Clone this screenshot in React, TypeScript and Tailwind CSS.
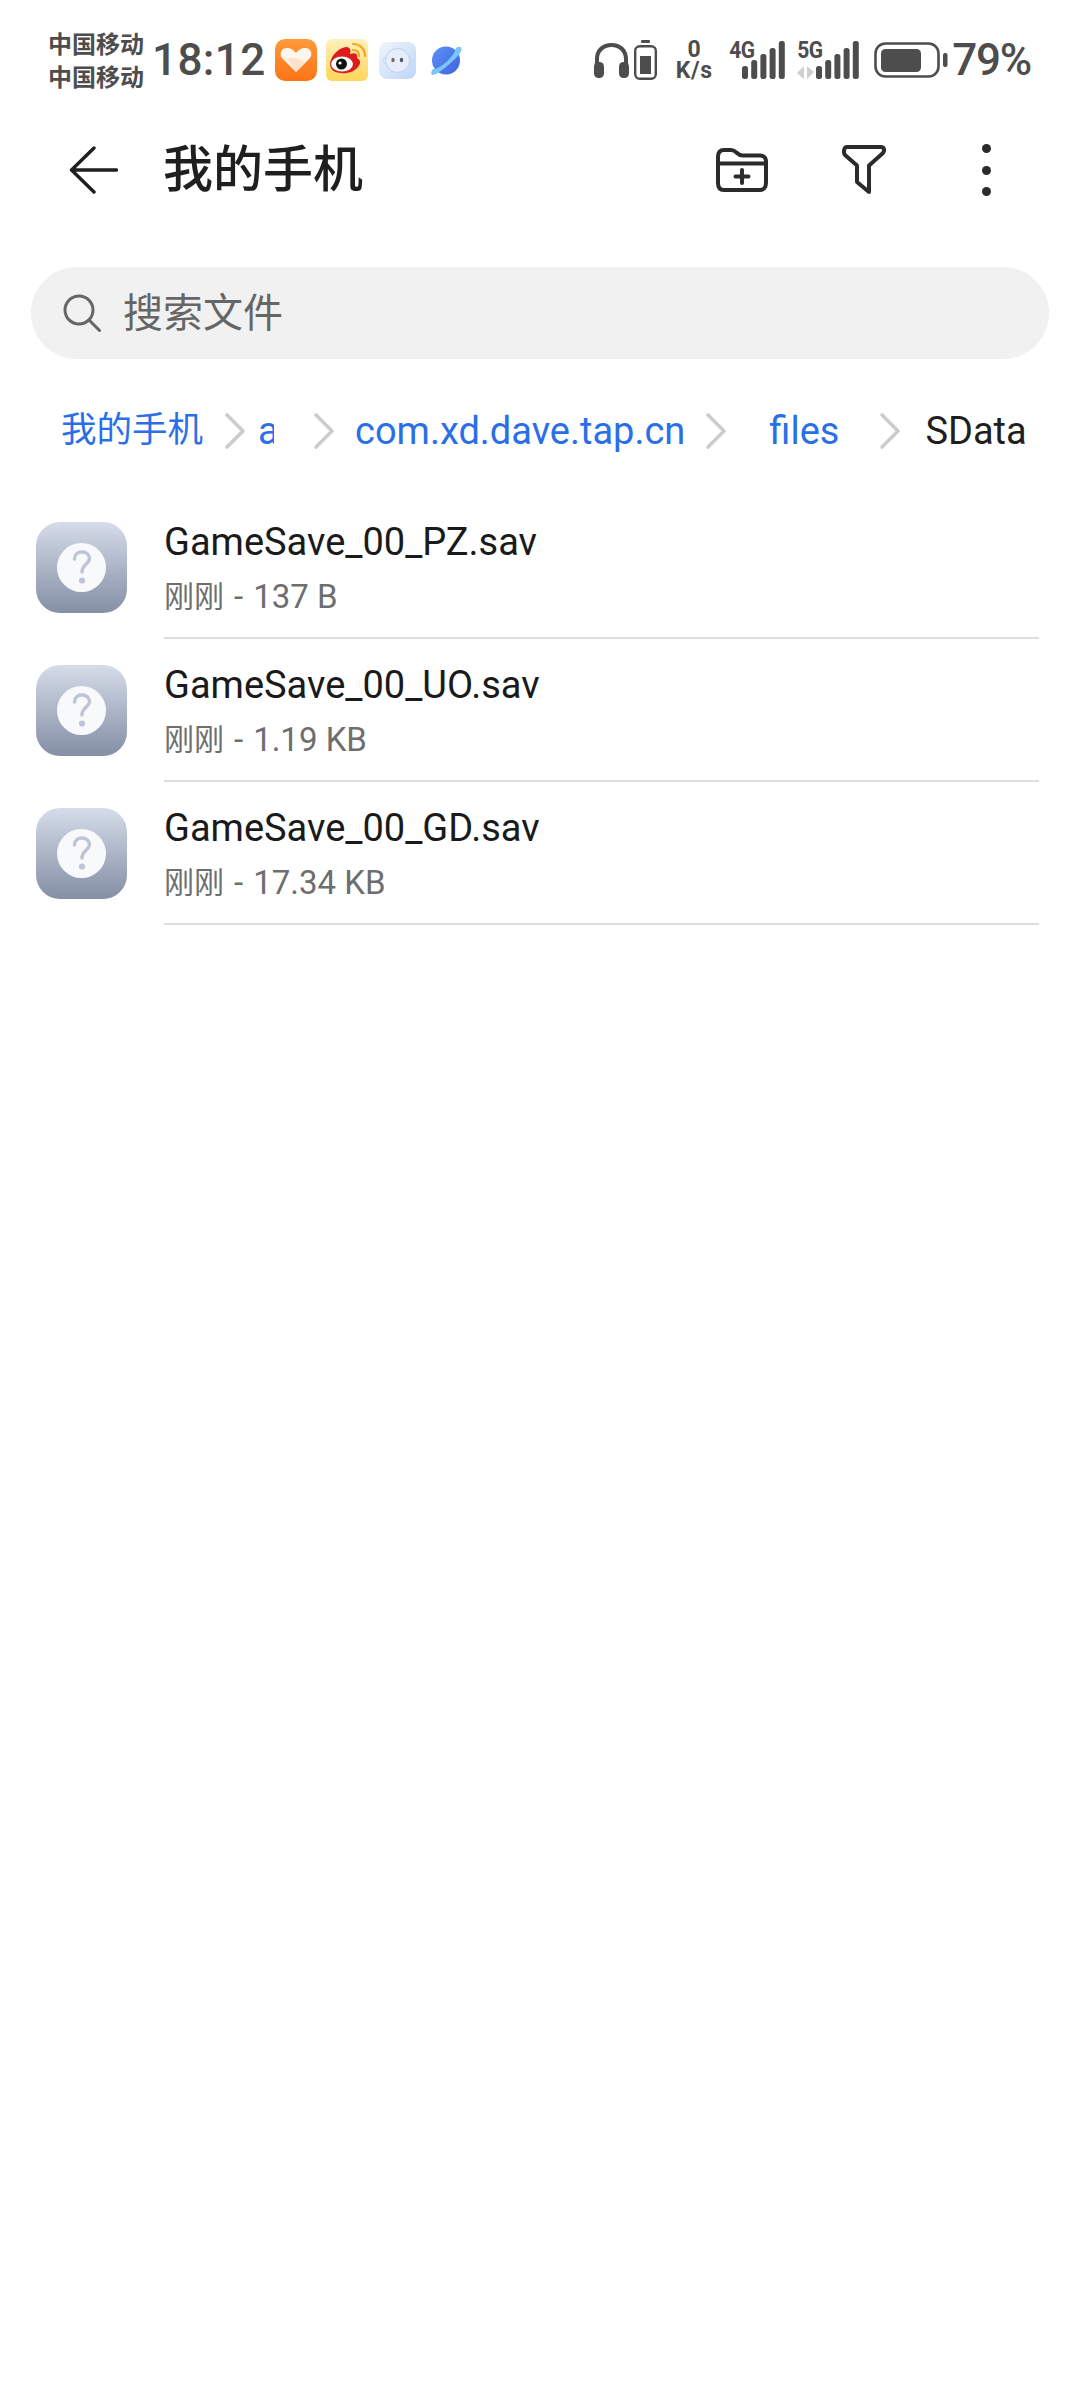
import { ChevronRight } from 'lucide-react';

const files = [
  { name: 'GameSave_00_PZ.sav', time: '刚刚', size: '137 B' },
  { name: 'GameSave_00_UO.sav', time: '刚刚', size: '1.19 KB' },
  { name: 'GameSave_00_GD.sav', time: '刚刚', size: '17.34 KB' },
];

const SANS = "font-['Roboto','Noto_Sans_CJK_SC',sans-serif]";

function HeartApp() {
  return (
    <svg width="42" height="42" viewBox="0 0 42 42" className="shrink-0">
      <defs>
        <linearGradient id="heartBg" x1="0" y1="0" x2="0" y2="1">
          <stop offset="0" stopColor="#ff9a3a" />
          <stop offset="1" stopColor="#fb7417" />
        </linearGradient>
      </defs>
      <rect width="42" height="42" rx="10" fill="url(#heartBg)" />
      <path d="M21 33 L7 19 C4 15 6 9 12 9 C16 9 19 11 21 14 C23 11 26 9 30 9 C36 9 38 15 35 19 Z" fill="#fff6ee" />
      <path d="M21 33 L12 20 C16 18 24 18 30 24 Z" fill="#fcd9bd" opacity="0.7" />
    </svg>
  );
}

function WeiboApp() {
  return (
    <svg width="42" height="42" viewBox="0 0 42 42" className="shrink-0">
      <defs>
        <linearGradient id="weiboBg" x1="0" y1="0" x2="0" y2="1">
          <stop offset="0" stopColor="#fff0bc" />
          <stop offset="1" stopColor="#ffd65a" />
        </linearGradient>
      </defs>
      <rect width="42" height="42" rx="6" fill="url(#weiboBg)" />
      <path d="M4 25 C4 18 12 9 20 8 C25 8 25 12 24 15 C29 13 32 15 31 19 C35 21 35 25 32 28 C28 33 21 35 15 34 C8 34 4 30 4 25 Z" fill="#dd1c1c" />
      <ellipse cx="16" cy="25" rx="11" ry="7.5" fill="#fff" />
      <circle cx="15.5" cy="25" r="5.5" fill="#111" />
      <circle cx="14" cy="24" r="1.6" fill="#fff" />
      <path d="M27 11 C31 11 33 13 33 17" fill="none" stroke="#f6a51f" strokeWidth="2.2" strokeLinecap="round" />
      <path d="M27 5 C34 5 39 10 39 17" fill="none" stroke="#f6a51f" strokeWidth="2.2" strokeLinecap="round" />
    </svg>
  );
}

function FaceApp() {
  return (
    <svg width="37" height="37" viewBox="0 0 37 37" className="shrink-0">
      <defs>
        <linearGradient id="faceBg" x1="0" y1="0" x2="1" y2="1">
          <stop offset="0" stopColor="#f0f5fb" />
          <stop offset="1" stopColor="#bcd6fb" />
        </linearGradient>
      </defs>
      <rect width="37" height="37" rx="8" fill="url(#faceBg)" />
      <circle cx="18.5" cy="18.5" r="12" fill="#e6eefb" stroke="#c4cfea" strokeWidth="1" />
      <path d="M6.5 15 L3 18.5 L6.5 22 M30.5 15 L34 18.5 L30.5 22" fill="none" stroke="#c4cfea" strokeWidth="1" />
      <ellipse cx="14" cy="18" rx="1.7" ry="2.2" fill="#7a6a5c" />
      <ellipse cx="22.5" cy="18" rx="1.7" ry="2.2" fill="#4d5668" />
    </svg>
  );
}

function PlanetApp() {
  return (
    <svg width="31" height="31" viewBox="0 0 31 31" className="shrink-0">
      <defs>
        <linearGradient id="planetBg" x1="0" y1="0" x2="1" y2="1">
          <stop offset="0" stopColor="#5d92f7" />
          <stop offset="1" stopColor="#3f63dc" />
        </linearGradient>
      </defs>
      <circle cx="15" cy="15.5" r="14" fill="url(#planetBg)" />
      <path d="M25 3 C28 1 31 1.5 30.5 5 C29.5 11 8 29 2.5 30 C-1 30.5 0 26 2 24 C8 25 24 11 25 3 Z" fill="#7cc4fb" />
    </svg>
  );
}

function Headphones() {
  return (
    <svg width="35" height="36" viewBox="0 0 35 36" className="shrink-0" fill="#4d4d4d">
      <path d="M1 24 V17 C1 7 8 1 17.5 1 C27 1 34 7 34 17 V24 H30 V17 C30 10 25 5 17.5 5 C10 5 5 10 5 17 V24 Z" />
      <rect x="0" y="20" width="10" height="16" rx="4.5" />
      <rect x="25" y="20" width="10" height="16" rx="4.5" />
    </svg>
  );
}

function SmallBattery() {
  return (
    <svg width="23" height="40" viewBox="0 0 23 40" className="shrink-0">
      <rect x="7" y="0" width="9" height="3" rx="1" fill="#4d4d4d" />
      <rect x="1.2" y="6.2" width="20.6" height="32.6" rx="4.5" fill="none" stroke="#4d4d4d" strokeWidth="2.4" />
      <rect x="6" y="16" width="11" height="18" fill="#4d4d4d" />
    </svg>
  );
}

// Five rising signal bars, pushed right when the data arrows sit in front of them.
function Signal({ label, arrows }: { label: string; arrows?: boolean }) {
  const bars = [13, 19, 25, 31, 38];
  const start = arrows ? 19 : 13;
  return (
    <div className="relative w-[62px] h-[38px] shrink-0">
      <span className="absolute left-0 top-[-4px] text-[21px] leading-[26px] font-bold text-[#4d4d4d] tracking-[-0.5px] font-['Roboto',sans-serif] [transform:scaleY(1.1)]">
        {label}
      </span>
      <svg width="62" height="38" viewBox="0 0 62 38" className="absolute left-0 top-0" fill="#4d4d4d">
        {bars.map((h, i) => (
          <rect key={i} x={start + i * 9.2} y={38 - h} width="6" height={h} rx="2.5" />
        ))}
        {arrows && (
          <g fill="#cfcfcf">
            <path d="M0 32 L7 25 V38 Z" />
            <path d="M17 31 L10 25 V38 Z" />
          </g>
        )}
      </svg>
    </div>
  );
}

function MainBattery() {
  return (
    <svg width="74" height="36" viewBox="0 0 74 36" className="shrink-0">
      <rect x="1.5" y="1.5" width="63" height="33" rx="10" fill="none" stroke="#4d4d4d" strokeWidth="2.6" />
      <rect x="7" y="7" width="40" height="23" rx="4.5" fill="#4d4d4d" />
      <rect x="69" y="11" width="4.5" height="14" rx="2" fill="#4d4d4d" />
    </svg>
  );
}

function StatusBar() {
  return (
    <div className="h-[90px] pt-[30px] pl-[48px] pr-[49px] flex items-center justify-between text-[#4d4d4d]">
      <div className="flex items-center">
        <div className={`w-[96px] mt-[3px] text-[24px] leading-[33px] font-bold ${SANS}`}>
          <div>中国移动</div>
          <div>中国移动</div>
        </div>
        <span className="ml-[8px] text-[44px] leading-none font-medium tracking-[0.4px] font-['Roboto',sans-serif]">18:12</span>
        <div className="ml-[9px]"><HeartApp /></div>
        <div className="ml-[9px]"><WeiboApp /></div>
        <div className="ml-[11px]"><FaceApp /></div>
        <div className="ml-[15px]"><PlanetApp /></div>
      </div>
      <div className="flex items-center">
        <Headphones />
        <div className="ml-[5px]"><SmallBattery /></div>
        <div className="ml-[16px] w-[42px] flex flex-col items-center font-['Roboto',sans-serif] font-bold">
          <span className="text-[23px] leading-[21px]">0</span>
          <span className="text-[23px] leading-[21px] tracking-[0.6px]">K/s</span>
        </div>
        <div className="ml-[14px]"><Signal label="4G" /></div>
        <div className="ml-[6px]"><Signal label="5G" arrows /></div>
        <div className="ml-[15px]"><MainBattery /></div>
        <span className="ml-[4px] text-[44px] leading-none font-medium tracking-[-1.2px] font-['Roboto',sans-serif]">79%</span>
      </div>
    </div>
  );
}

function Toolbar() {
  return (
    <div className="h-[160px] flex items-center pl-[69px] pr-[89px] text-[#1f1f1f]">
      <svg width="49" height="48" viewBox="0 0 49 48" fill="none" stroke="#1f1f1f" strokeWidth="3.4" strokeLinecap="round" strokeLinejoin="round" className="shrink-0">
        <path d="M47.5 24 H2.5 M25 2 L2.5 24 L25 46" />
      </svg>
      <h1 className={`ml-[45px] text-[50px] leading-none font-medium ${SANS}`}>我的手机</h1>
      <div className="flex-1" />
      <svg width="52" height="44" viewBox="0 0 52 44" fill="none" stroke="#2b2b2b" strokeWidth="4" strokeLinejoin="round" strokeLinecap="round" className="shrink-0">
        <path d="M2 9 C2 4 4 2 8 2 H15 C18 2 19 3 21 5 C23 7 24 7.5 27 7.5 H44 C48 7.5 50 10 50 13 V35 C50 40 47 42 44 42 H8 C4 42 2 40 2 35 Z" />
        <path d="M2 15.5 H50" />
        <path d="M26 22 V35 M19.5 28.5 H32.5" />
      </svg>
      <svg width="44" height="50" viewBox="0 0 44 50" fill="none" stroke="#2b2b2b" strokeWidth="4" strokeLinejoin="round" strokeLinecap="round" className="ml-[74px] shrink-0">
        <path d="M5 2 H39 C42 2 43 5 41 8 L27 20.5 V47 L15 37 V20.5 L3 10 C1 7 2 2 5 2 Z" />
      </svg>
      <div className="ml-[96px] w-[9px] flex flex-col gap-[12.5px] shrink-0">
        <span className="w-[9px] h-[9px] rounded-full bg-[#2b2b2b]" />
        <span className="w-[9px] h-[9px] rounded-full bg-[#2b2b2b]" />
        <span className="w-[9px] h-[9px] rounded-full bg-[#2b2b2b]" />
      </div>
    </div>
  );
}

// The lucide glyph sits in the middle of its box, so the box is trimmed to the stroke
function Crumb({ className }: { className: string }) {
  return (
    <span className={`w-[17px] h-[34px] shrink-0 flex items-center justify-center ${className}`}>
      <ChevronRight size={64} strokeWidth={3.6} absoluteStrokeWidth className="text-[#cccccc] shrink-0" />
    </span>
  );
}

function Breadcrumbs() {
  return (
    <div className={`mt-[37px] h-[70px] pl-[61px] flex items-center text-[38px] leading-none text-[#2a6fe8] whitespace-nowrap ${SANS}`}>
      <span className="text-[35.5px] shrink-0">我的手机</span>
      <Crumb className="ml-[23px]" />
      <span className="ml-[15px] w-[16px] overflow-hidden shrink-0">a</span>
      <Crumb className="ml-[41px]" />
      <span className="ml-[23px] shrink-0">com.xd.dave.tap.cn</span>
      <Crumb className="ml-[22px]" />
      <span className="ml-[45px] shrink-0">files</span>
      <Crumb className="ml-[42px]" />
      <span className="ml-[27px] shrink-0 text-[#1f1f1f]">SData</span>
    </div>
  );
}

function UnknownFileIcon() {
  return (
    <div className="w-[91px] h-[91px] shrink-0 rounded-[24px] bg-gradient-to-b from-[#d5dde9] to-[#858fa5] flex items-center justify-center">
      <div className="w-[49px] h-[49px] rounded-full bg-[#f8f9fb] flex items-center justify-center">
        <svg width="20" height="36" viewBox="0 0 20 36" fill="none" stroke="#bcc4d6" strokeWidth="3.4" strokeLinecap="round">
          <path d="M2.5 9 C2.5 4.5 6 2 10 2 C14.5 2 17.5 5 17.5 8.5 C17.5 14 10 14.5 10 22" />
          <circle cx="10" cy="30.5" r="1.4" fill="#bcc4d6" />
        </svg>
      </div>
    </div>
  );
}

export default function App() {
  return (
    <div className="w-[1080px] h-[2388px] bg-white overflow-hidden">
      <StatusBar />
      <Toolbar />
      <div className="mt-[17px] ml-[31px] mr-[31px] h-[92px] rounded-full bg-[#f1f1f1] flex items-center pl-[32px] text-[#666666]">
        <svg width="38" height="38" viewBox="0 0 38 38" fill="none" stroke="#666666" strokeWidth="3" strokeLinecap="round" className="shrink-0">
          <circle cx="16" cy="16" r="14" />
          <path d="M26 26 L36.5 36.5" />
        </svg>
        <span className={`ml-[22px] mt-[2px] text-[40px] leading-none ${SANS}`}>搜索文件</span>
      </div>
      <Breadcrumbs />
      <ul className="mt-[30px] pl-[36px] pr-[41px]">
        {files.map(file => (
          <li key={file.name} className="h-[143px] flex items-center">
            <UnknownFileIcon />
            <div className={`ml-[37px] flex-1 h-full border-b-2 border-[#dedede] flex flex-col justify-center ${SANS}`}>
              <div className="mt-[2px] text-[38px] leading-[48px] text-[#1a1a1a]">{file.name}</div>
              <div className="mt-[11px] text-[33px] leading-[40px] text-[#6e6e6e] flex items-center">
                <span className="text-[30px]">{file.time}</span>
                <span className="ml-[10px] mr-[10px]">-</span>
                <span>{file.size}</span>
              </div>
            </div>
          </li>
        ))}
      </ul>
    </div>
  );
}
